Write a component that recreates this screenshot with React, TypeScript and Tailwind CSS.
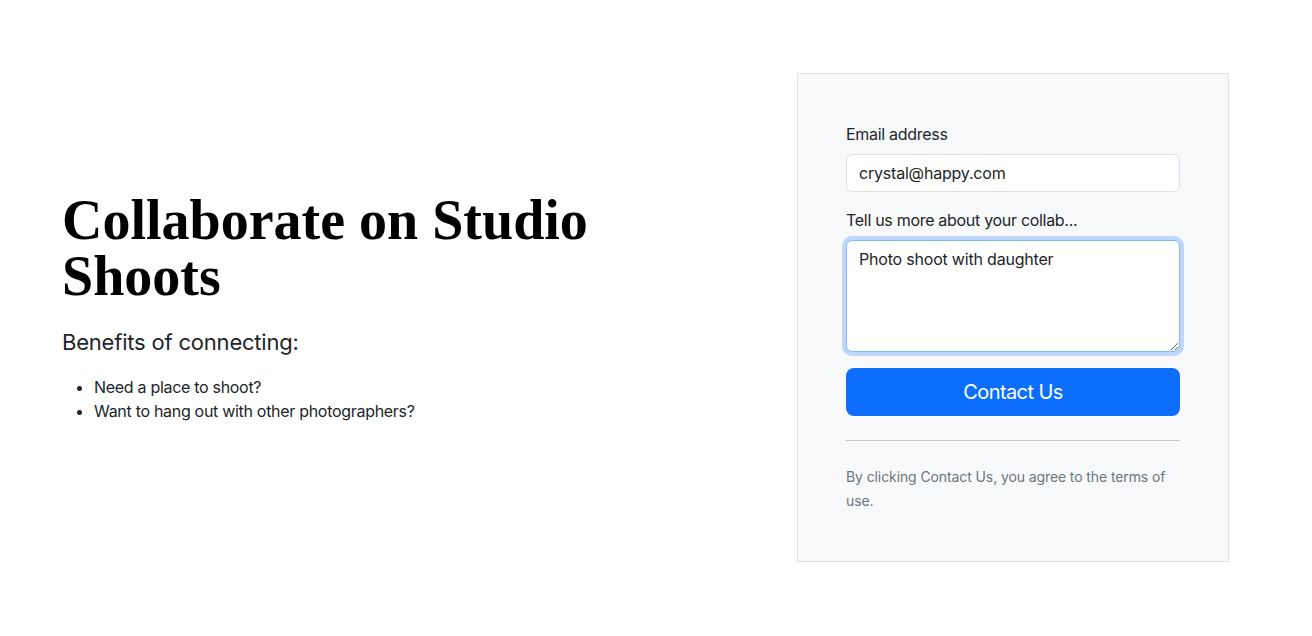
import React from 'react';

const sans = "font-['Inter','Liberation_Sans',sans-serif]";

export default function App() {
  return (
    <div className={`${sans} h-[636px] w-full bg-white text-[#212529] flex items-start`}>
      {/* Left - intro copy */}
      <div className="flex-1 pl-[62px] pr-6 mt-[192px]">
        <h1 className="font-['Liberation_Serif','Times_New_Roman',serif] font-bold text-[56px] leading-none mb-[22px] text-black">
          Collaborate on Studio
          <br />
          Shoots
        </h1>
        <p className="text-[22px] leading-[33px] tracking-[-0.2px] mb-4">Benefits of connecting:</p>
        <ul className="list-disc pl-8 text-[16px] leading-6 tracking-[-0.3px]">
          <li>Need a place to shoot?</li>
          <li>Want to hang out with other photographers?</li>
        </ul>
      </div>

      {/* Right - contact card */}
      <div className="w-[432px] mt-[73px] mr-[83px] shrink-0 bg-[#f8f9fa] border border-[#dee2e6] p-12 tracking-[-0.3px]">
        <form onSubmit={(e) => e.preventDefault()}>
          <div className="mb-4">
            <label className="block text-[16px] leading-6 mb-2">Email address</label>
            <input
              type="email"
              defaultValue="crystal@happy.com"
              className="block w-full h-[38px] px-3 py-1.5 text-[16px] leading-6 bg-white border border-[#dee2e6] rounded-md outline-none tracking-[-0.2px]"
            />
          </div>
          <div className="mb-4">
            <label className="block text-[16px] leading-6 mb-2">Tell us more about your collab...</label>
            <textarea
              defaultValue="Photo shoot with daughter"
              className="block w-full h-[112px] px-3 py-1.5 text-[16px] leading-6 bg-white border border-[#86b7fe] rounded-md outline-none shadow-[0_0_0_4px_rgba(13,110,253,0.25)] tracking-[-0.2px]"
            />
          </div>
          <button
            type="submit"
            className="w-full h-12 rounded-lg bg-[#0d6efd] text-white text-[20px] leading-[30px] tracking-[-0.6px]"
          >
            Contact Us
          </button>
          <hr className="my-6 border-0 border-t border-[#c4c5c6]" />
          <p className="text-[14px] leading-6 text-[#6c757d] tracking-[-0.1px]">
            By clicking Contact Us, you agree to the terms of use.
          </p>
        </form>
      </div>
    </div>
  );
}
